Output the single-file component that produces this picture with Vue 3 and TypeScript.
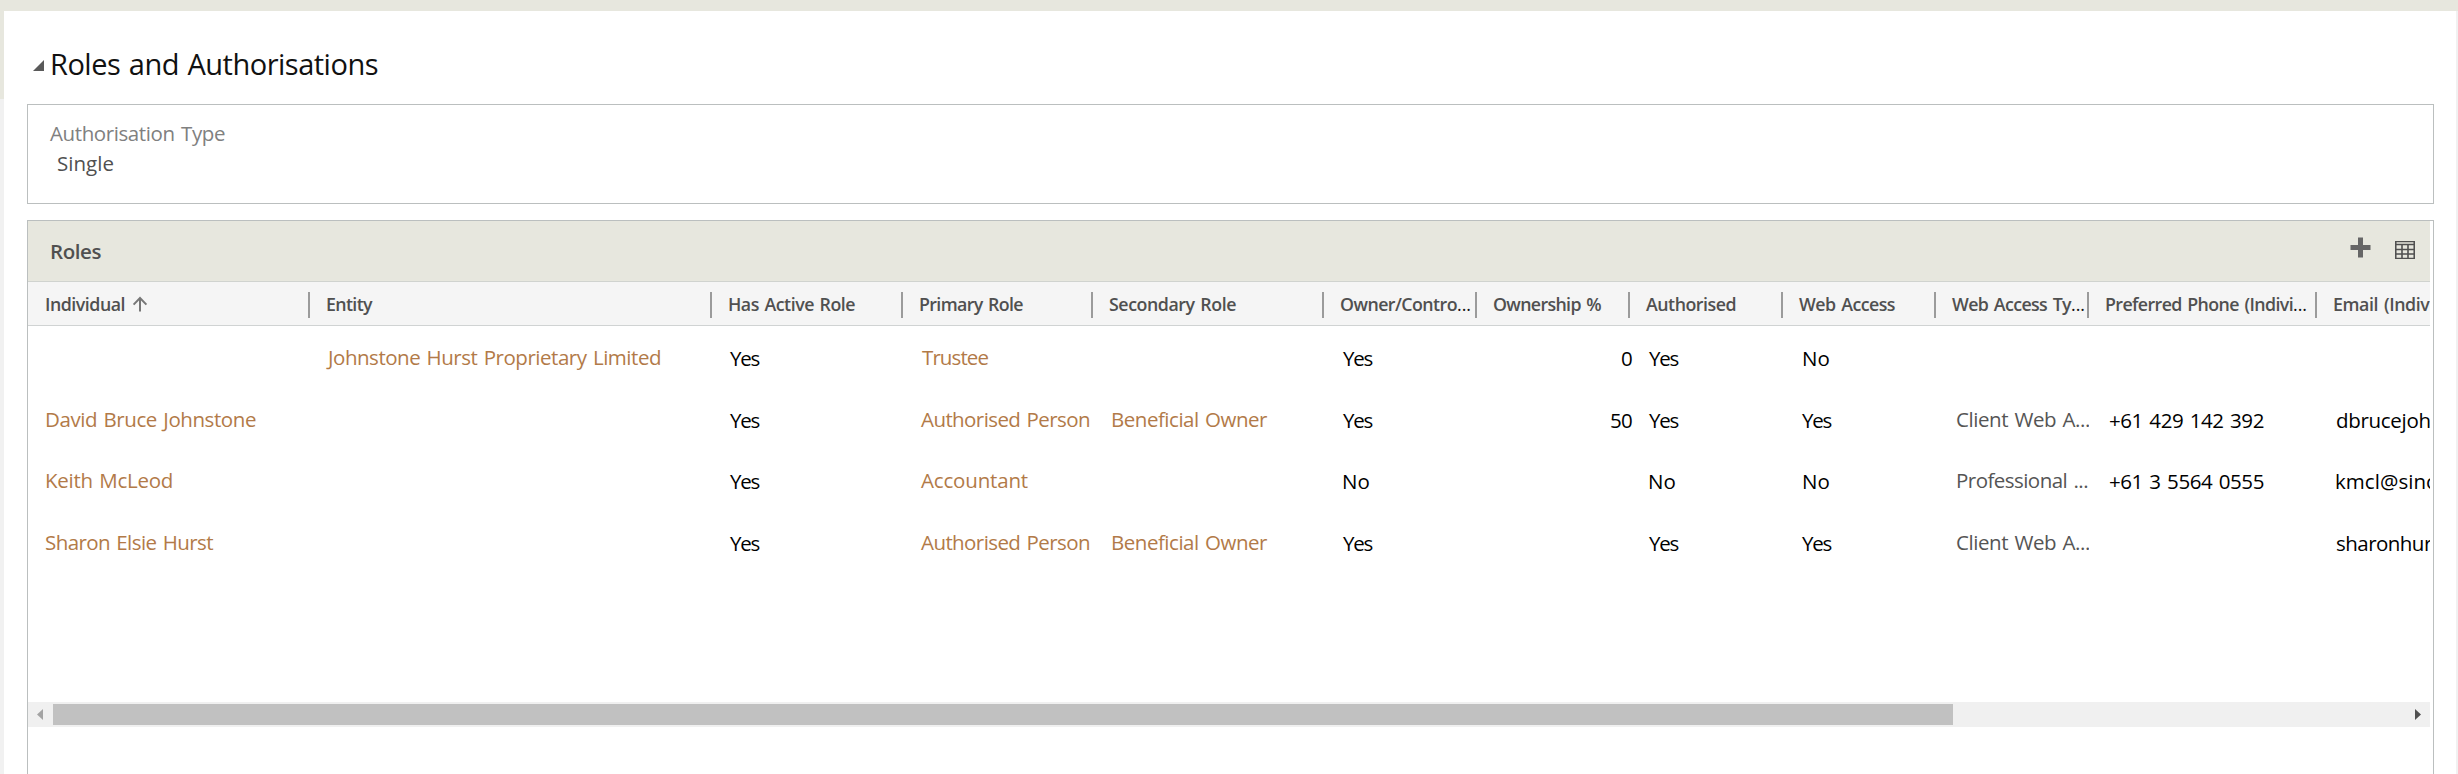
<script setup lang="ts">
import type { Directive } from 'vue'

interface Column { label: string; cut?: boolean; width: number; sorted?: boolean }
interface Cell { text: string; width: number; pad: number; kind?: 'link' | 'muted' | 'num' }

// Spreads the letters of an element over the given width.
const vFit: Directive<HTMLElement, number> = {
  mounted(el, { value }) {
    const count = (el.textContent ?? '').length
    if (!value || !count) return
    const natural = el.getBoundingClientRect().width
    el.style.letterSpacing = `${(value - natural) / count}px`
  },
}

const columns: Column[] = [
  { label: 'Individual', width: 80, sorted: true },
  { label: 'Entity', width: 46 },
  { label: 'Has Active Role', width: 127 },
  { label: 'Primary Role', width: 104 },
  { label: 'Secondary Role', width: 127 },
  { label: 'Owner/Contro', width: 117, cut: true },
  { label: 'Ownership %', width: 108 },
  { label: 'Authorised', width: 90 },
  { label: 'Web Access', width: 96 },
  { label: 'Web Access Ty', width: 119, cut: true },
  { label: 'Preferred Phone (Indivi', width: 188, cut: true },
  { label: 'Email (Indivi', width: 101 },
]

const none: Cell = { text: '', width: 0, pad: 0 }
const yes = (pad: number): Cell => ({ text: 'Yes', width: 29, pad })
const no = (pad: number): Cell => ({ text: 'No', width: 28, pad })
const link = (text: string, width: number, pad: number): Cell => ({ text, width, pad, kind: 'link' })
const muted = (text: string, width: number): Cell => ({ text, width, pad: 20, kind: 'muted' })
const num = (text: string, width: number): Cell => ({ text, width, pad: 0, kind: 'num' })
const plain = (text: string, width: number, pad: number): Cell => ({ text, width, pad })

const rows: Cell[][] = [
  [none, link('Johnstone Hurst Proprietary Limited', 333, 18), yes(18), link('Trustee', 66, 19), none, yes(19), num('0', 11), yes(19), no(19), none, none, none],
  [link('David Bruce Johnstone', 211, 17), none, yes(18), link('Authorised Person', 169, 18), link('Beneficial Owner', 156, 18), yes(19), num('50', 22), yes(19), yes(19), muted('Client Web A...', 134), plain('+61 429 142 392', 155, 20), plain('dbrucejohn', 107, 19)],
  [link('Keith McLeod', 128, 17), none, yes(18), link('Accountant', 107, 18), none, no(18), none, no(18), no(19), muted('Professional ...', 132), plain('+61 3 5564 0555', 155, 20), plain('kmcl@sinc', 101, 18)],
  [link('Sharon Elsie Hurst', 168, 17), none, yes(18), link('Authorised Person', 169, 18), link('Beneficial Owner', 156, 18), yes(19), none, yes(19), yes(19), muted('Client Web A...', 134), none, plain('sharonhurs', 105, 19)],
]
</script>

<template>
  <div class="page">
    <div class="rail"></div>
    <main class="sheet">
      <h2 class="title">
        <svg class="toggle" width="11" height="11" viewBox="0 0 11 11"><path d="M11 0V11H0Z" fill="#5a5a5a" /></svg>
        <span v-fit="328">Roles and Authorisations</span>
      </h2>

      <section class="box field">
        <div class="label"><span v-fit="175">Authorisation Type</span></div>
        <div class="value"><span v-fit="57">Single</span></div>
      </section>

      <section class="box roles">
        <div class="grid">
          <header class="bar">
            <span v-fit="51" class="bar-title">Roles</span>
            <svg class="plus" width="21" height="21" viewBox="0 0 21 21"><path d="M8 0.5h5v7.5h7.5v5H13v7.5H8V13H0.5V8H8z" fill="#666" /></svg>
            <svg class="table-icon" width="20" height="18" viewBox="0 0 20 18">
              <path d="M0.75 0.5H19.25V17.5H0.75Z M1 3.5H19M1 8.5H19M1 13H19M7 4V17M13 4V17" fill="none" stroke="#505050" stroke-width="1.6" />
            </svg>
          </header>
          <div class="row head">
            <div v-for="c in columns" :key="c.label" class="th">
              <span v-fit="c.width">{{ c.label }}</span>
              <span v-if="c.cut" v-fit="14" class="dots">...</span>
              <svg v-if="c.sorted" class="sort" width="16" height="16" viewBox="0 0 16 16"><path d="M8 15.5V1.5M1.6 8.6L8 2L14.4 8.6" fill="none" stroke="#777" stroke-width="2" /></svg>
            </div>
          </div>
          <div class="body">
            <div v-for="(r, i) in rows" :key="i" class="row">
              <div v-for="(c, j) in r" :key="j" class="td" :class="c.kind" :style="{ paddingLeft: c.pad + 'px' }">
                <span v-fit="c.width">{{ c.text }}</span>
              </div>
            </div>
          </div>
          <div class="scroll">
            <svg width="25" height="25" viewBox="0 0 25 25"><path d="M15 7V18L9 12.5Z" fill="#a3a3a3" /></svg>
            <div class="track"><div class="thumb"></div></div>
            <svg width="25" height="25" viewBox="0 0 25 25"><path d="M10 7V18L16 12.5Z" fill="#505050" /></svg>
          </div>
        </div>
      </section>
    </main>
  </div>
</template>

<style>
body { margin: 0; overflow: hidden; }
</style>

<style scoped>
.page {
  box-sizing: border-box;
  width: 2458px;
  height: 774px;
  padding: 11px 2px 0 0;
  display: flex;
  background:
    linear-gradient(#f1f1f1, #f1f1f1) right 0 top 11px / 2px 763px no-repeat,
    linear-gradient(#e7e7de 99px, #f1f1f1 99px);
  font-family: "Open Sans", "Noto Sans", sans-serif;
  font-size: 20.5px;
  font-stretch: 94%;
  word-spacing: 1.5px;
  white-space: pre;
  overflow: hidden;
}
.page span { display: inline-block; }
.rail { width: 4px; flex: none; }
.sheet {
  box-sizing: border-box;
  flex: 1;
  min-width: 0;
  padding: 0 22px 0 23px;
  background: #fff;
  display: flex;
  flex-direction: column;
}
.title {
  margin: 0;
  height: 93px;
  flex: none;
  padding-left: 6px;
  display: flex;
  font-size: 29px;
  font-weight: 400;
  line-height: 40px;
  color: #111;
}
.title span { margin: 33px 0 0 6px; }
.toggle { margin-top: 49px; }
.box { box-sizing: border-box; border: 1px solid #bbbfbf; flex: none; }
.field { height: 100px; padding: 13px 0 0 22px; }
.label { height: 30px; line-height: 30px; color: #808080; }
.value { height: 30px; line-height: 30px; padding-left: 7px; color: #505050; }
.roles { margin-top: 16px; height: 580px; }
.grid { width: 2402px; overflow: hidden; }
.bar {
  box-sizing: border-box;
  height: 61px;
  display: flex;
  align-items: flex-start;
  background: #e7e7de;
  border-bottom: 1px solid #d0d3cf;
  color: #505050;
}
.bar-title { margin: 15px auto 0 22px; line-height: 30px; font-weight: 600; }
.plus { margin-top: 16px; }
.table-icon { margin: 20px 15px 0 24px; }
.row {
  display: grid;
  grid-template-columns: 282px 402px 191px 190px 231px repeat(5, 153px) 228px 113px;
}
.head {
  height: 43px;
  background: #f5f5f5;
  border-bottom: 1px solid #d0d3d3;
  font-size: 17.8px;
  font-weight: 600;
  line-height: 24px;
  color: #505050;
}
.th {
  box-sizing: border-box;
  height: 26px;
  margin-top: 10px;
  padding-left: 16px;
  display: flex;
  border-right: 2px solid #9b9b9b;
  overflow: hidden;
}
.th:first-child { padding-left: 17px; }
.th:last-child { border-right: 0; }
.dots { color: #111; font-weight: 400; }
.sort { margin: 4px 0 0 7px; }
.body { height: 376px; }
.body .row { height: 61.5px; line-height: 64px; color: #000; }
.td { box-sizing: border-box; min-width: 0; overflow: hidden; }
.td.link, .td.muted { line-height: 62px; color: #b27a48; }
.td.muted { color: #555; }
.num { text-align: right; overflow: visible; margin-right: -2px; }
.scroll { height: 25px; display: flex; background: #f0f0f0; }
.track { flex: 1; padding: 2px 0; }
.thumb { width: 1900px; height: 21px; background: #c1c1c1; }
</style>
